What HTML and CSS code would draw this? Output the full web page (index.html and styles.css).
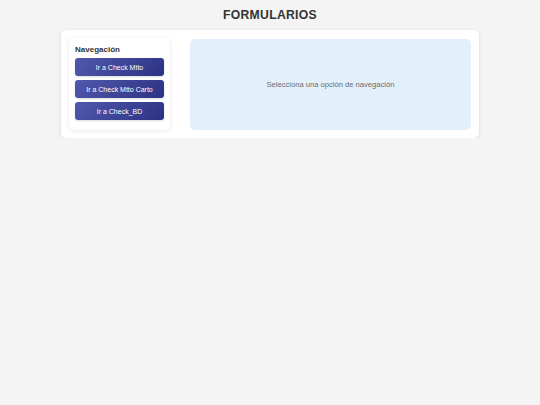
FILE: index.html
```html
<!DOCTYPE html>
<html lang="es">
<head>
<meta charset="utf-8">
<title>Formularios</title>
<link rel="stylesheet" href="styles.css">
</head>
<body>
<h1 class="title">FORMULARIOS</h1>
<div class="container">
  <aside class="sidebar">
    <h2 class="nav-title">Navegación</h2>
    <button class="nav-btn">Ir a Check Mtto</button>
    <button class="nav-btn">Ir a Check Mtto Carto</button>
    <button class="nav-btn">Ir a Check_BD</button>
  </aside>
  <main class="content">
    <p class="placeholder">Selecciona una opción de navegación</p>
  </main>
</div>
</body>
</html>
```
FILE: styles.css
```css
html, body {
  margin: 0;
  padding: 0;
  background: #f4f4f4;
  font-family: "Liberation Sans", Arial, sans-serif;
}
.title {
  margin: 0;
  padding-top: 8px;
  height: 22px;
  line-height: 14px;
  text-align: center;
  font-size: 12.2px;
  font-weight: bold;
  letter-spacing: 0.3px;
  color: #333;
}
.container {
  width: 402px;
  margin: 0 auto;
  padding: 8px;
  background: #fff;
  border-radius: 5px;
  box-shadow: 0 1px 4px rgba(0, 0, 0, 0.12);
  display: flex;
  gap: 20px;
}
.sidebar {
  width: 89px;
  flex: none;
  padding: 6px 6px 10px;
  background: #fff;
  border-radius: 5px;
  box-shadow: 0 1px 5px rgba(0, 0, 0, 0.09);
  display: flex;
  flex-direction: column;
  gap: 4px;
}
.nav-title {
  margin: 0 0 -2px;
  font-size: 8px;
  line-height: 12px;
  font-weight: bold;
  color: #333;
}
.nav-btn {
  height: 18px;
  padding: 0;
  border: none;
  border-radius: 3px;
  background: linear-gradient(135deg, #5159ad, #2c3283);
  color: #fff;
  font-family: "Liberation Sans", Arial, sans-serif;
  font-size: 7px;
  box-shadow: 0 1px 2px rgba(0, 0, 0, 0.15);
}
.content {
  flex: 1;
  margin-top: 1px;
  background: #e3f0fb;
  border-radius: 5px;
  display: flex;
  align-items: center;
  justify-content: center;
}
.placeholder {
  margin: 0;
  font-size: 7.6px;
  color: #6a6a6a;
}
```
